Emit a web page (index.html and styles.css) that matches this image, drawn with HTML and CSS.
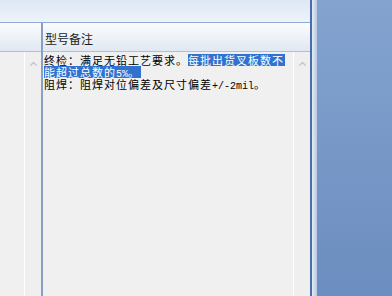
FILE: index.html
```html
<!DOCTYPE html>
<html>
<head>
<meta charset="utf-8">
<link rel="stylesheet" href="styles.css">
</head>
<body>
<div class="main">
  <div class="topbar"></div>
  <div class="bluebar"></div>
  <div class="grid">
    <div class="leftcol">
      <div class="hdr"></div>
      <div class="lbody">
        <div class="lfill"></div>
        <div class="vscroll">
          <svg class="arrow" width="7" height="5" viewBox="0 0 7 5"><polyline points="0.5,4.5 3.5,1.5 6.5,4.5" fill="none" stroke="#c4c4c4" stroke-width="1.4"/></svg>
        </div>
      </div>
    </div>
    <div class="divider"></div>
    <div class="rightcol">
      <div class="hdr rhdr">型号备注</div>
      <div class="rbody">
        <div class="memo">
          <div class="line">终检：满足无铅工艺要求。<span class="sel">每批出货叉板数不</span></div>
          <div class="line"><span class="sel">能超过总数的<span class="lat">5%</span>。</span></div>
          <div class="line">阻焊：阻焊对位偏差及尺寸偏差<span class="lat">+/-2mil</span>。</div>
        </div>
        <div class="vscroll rscroll">
          <svg class="arrow" width="7" height="5" viewBox="0 0 7 5"><polyline points="0.5,4.5 3.5,1.5 6.5,4.5" fill="none" stroke="#c4c4c4" stroke-width="1.4"/></svg>
        </div>
      </div>
    </div>
  </div>
</div>
<div class="edge"></div>
<div class="side"></div>
</body>
</html>
```
FILE: styles.css
```css
html, body {
  margin: 0;
  padding: 0;
}
body {
  width: 392px;
  height: 296px;
  overflow: hidden;
  display: flex;
  font-family: "Noto Sans CJK SC", "Liberation Sans", sans-serif;
  font-size: 12px;
}
.main {
  width: 310px;
  display: flex;
  flex-direction: column;
  border-right: 2px solid #4a6ea8;
}
.topbar {
  height: 22px;
  background: linear-gradient(#dde7f5, #eef3fa);
}
.bluebar {
  height: 1px;
  background: #8eaad6;
}
.grid {
  flex: 1;
  display: flex;
  min-height: 0;
}
.hdr {
  height: 29px;
  box-sizing: border-box;
  background: linear-gradient(#fbfcfe, #e0e8f2);
  border-bottom: 1px solid #aebfd6;
}
.leftcol {
  width: 41px;
  display: flex;
  flex-direction: column;
}
.lbody {
  flex: 1;
  display: flex;
  background: #f0f0f0;
}
.lfill {
  width: 24px;
  border-right: 1px solid #ffffff;
}
.vscroll {
  width: 16px;
  background: #efefef;
  display: flex;
  justify-content: center;
  align-items: flex-start;
}
.arrow {
  margin-top: 9px;
}
.divider {
  width: 2px;
  background: #8a9fc4;
}
.rightcol {
  flex: 1;
  display: flex;
  flex-direction: column;
}
.rhdr {
  padding: 10px 0 0 2px;
  color: #1b1b1b;
  line-height: 12px;
}
.rbody {
  flex: 1;
  display: flex;
  background: #f0f0f0;
}
.memo {
  flex: 1;
  padding: 2px 0 0 1px;
  color: #000;
  border-right: 1px solid #ffffff;
  font-size: 11px;
  letter-spacing: 1px;
}
.line {
  height: 12px;
  line-height: 12px;
  white-space: nowrap;
}
.sel {
  display: inline-block;
  height: 12px;
  line-height: 12px;
  vertical-align: top;
  background: #2f72d0;
  color: #ffffff;
  padding-right: 1px;
}
.lat {
  font-family: "Liberation Mono", monospace;
  font-size: 10px;
  letter-spacing: 0;
}
.rscroll {
  width: 16px;
}
.edge {
  width: 5px;
  background: linear-gradient(90deg, #e4ebf5, #b7c9e4);
}
.side {
  flex: 1;
  background: linear-gradient(#84a3cf, #6b8dbf);
}
```
